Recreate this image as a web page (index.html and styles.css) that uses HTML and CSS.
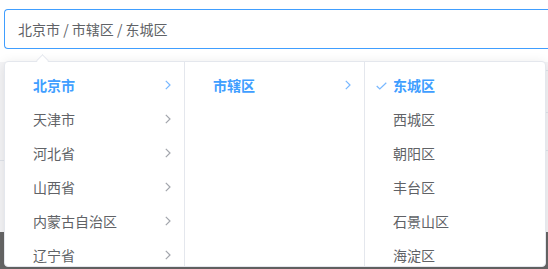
FILE: index.html
```html
<!DOCTYPE html>
<html>

<head>
    <title>Cascader</title>
    <link rel="stylesheet" href="styles.css">
</head>

<body>

    <div class="cascader">
        <div class="cascader-input">北京市 / 市辖区 / 东城区</div>

        <div class="dropdown">
            <div class="popper-arrow"></div>
            <div class="panel">
                <ul class="menu">
                    <li class="node active">
                        <span class="label">北京市</span>
                        <svg class="postfix" width="6" height="10" viewBox="0 0 6 10"><path d="M0.8 0.8 L5 5 L0.8 9.2" /></svg>
                    </li>
                    <li class="node">
                        <span class="label">天津市</span>
                        <svg class="postfix" width="6" height="10" viewBox="0 0 6 10"><path d="M0.8 0.8 L5 5 L0.8 9.2" /></svg>
                    </li>
                    <li class="node">
                        <span class="label">河北省</span>
                        <svg class="postfix" width="6" height="10" viewBox="0 0 6 10"><path d="M0.8 0.8 L5 5 L0.8 9.2" /></svg>
                    </li>
                    <li class="node">
                        <span class="label">山西省</span>
                        <svg class="postfix" width="6" height="10" viewBox="0 0 6 10"><path d="M0.8 0.8 L5 5 L0.8 9.2" /></svg>
                    </li>
                    <li class="node">
                        <span class="label">内蒙古自治区</span>
                        <svg class="postfix" width="6" height="10" viewBox="0 0 6 10"><path d="M0.8 0.8 L5 5 L0.8 9.2" /></svg>
                    </li>
                    <li class="node">
                        <span class="label">辽宁省</span>
                        <svg class="postfix" width="6" height="10" viewBox="0 0 6 10"><path d="M0.8 0.8 L5 5 L0.8 9.2" /></svg>
                    </li>
                </ul>
                <ul class="menu">
                    <li class="node active">
                        <span class="label">市辖区</span>
                        <svg class="postfix" width="6" height="10" viewBox="0 0 6 10"><path d="M0.8 0.8 L5 5 L0.8 9.2" /></svg>
                    </li>
                </ul>
                <ul class="menu">
                    <li class="node active">
                        <svg class="prefix" width="11" height="8" viewBox="0 0 11 8"><path d="M0.7 4 L3.8 7 L10.3 0.7" /></svg>
                        <span class="label">东城区</span>
                    </li>
                    <li class="node"><span class="label">西城区</span></li>
                    <li class="node"><span class="label">朝阳区</span></li>
                    <li class="node"><span class="label">丰台区</span></li>
                    <li class="node"><span class="label">石景山区</span></li>
                    <li class="node"><span class="label">海淀区</span></li>
                </ul>
            </div>
        </div>
    </div>

    <div class="backdrop">
        <div class="side side-left">
            <div class="row" style="height: 98px"></div>
        </div>
        <div class="side side-right">
            <div class="row" style="height: 8px"></div>
            <div class="row" style="height: 41px"></div>
            <div class="row" style="height: 37px"></div>
        </div>
    </div>
    <div class="footer"></div>

</body>

</html>
```

FILE: styles.css
```css
body {
    margin: 0;
    width: 548px;
    height: 269px;
    overflow: hidden;
    background-color: #fff;
    font-family: "Noto Sans CJK SC", "Liberation Sans", sans-serif;
    color: #606266;
    font-size: 14px;
}

.cascader {
    position: relative;
    padding: 9px 0 0 4px;
}

/* right edge of the input is cut off by the frame */
.cascader-input {
    box-sizing: border-box;
    width: 544px;
    height: 40px;
    line-height: 38px;
    padding: 0 13px;
    border: 1px solid #409eff;
    border-right: none;
    border-radius: 4px 0 0 4px;
    color: #606266;
    white-space: nowrap;
}

.dropdown {
    position: absolute;
    top: 61px;
    left: 4px;
    z-index: 10;
}

.popper-arrow {
    position: absolute;
    top: -5px;
    left: 34px;
    width: 8px;
    height: 8px;
    background-color: #fff;
    border-top: 1px solid #e4e7ed;
    border-left: 1px solid #e4e7ed;
    transform: rotate(45deg);
    z-index: 2;
}

.panel {
    display: flex;
    background-color: #fff;
    border: 1px solid #e4e7ed;
    border-radius: 4px;
    box-shadow: 0 2px 12px rgba(0, 0, 0, 0.1);
    overflow: hidden;
}

.menu {
    box-sizing: border-box;
    width: 180px;
    height: 204px;
    margin: 0;
    padding: 6px 0;
    list-style: none;
    border-right: 1px solid #e4e7ed;
    overflow: hidden;
}

.menu:last-child {
    border-right: none;
}

.node {
    position: relative;
    display: flex;
    align-items: center;
    height: 34px;
    padding: 0 30px 0 20px;
    color: #606266;
}

.label {
    padding: 0 8px;
    white-space: nowrap;
}

.node.active {
    color: #409eff;
    font-weight: 700;
}

.postfix {
    position: absolute;
    right: 13px;
    top: 12px;
    fill: none;
    stroke: #a3a6ad;
    stroke-width: 1.2;
}

.node.active .postfix {
    stroke: #79b8ff;
}

.prefix {
    position: absolute;
    left: 11px;
    top: 14px;
    fill: none;
    stroke: #79b8ff;
    stroke-width: 1.2;
}

.backdrop {
    display: flex;
    justify-content: space-between;
    margin-top: 13px;
    height: 170px;
}

.side {
    width: 6px;
    background-color: #f4f4f6;
}

.row {
    border-bottom: 1px solid #dfe3ea;
}

.footer {
    height: 40px;
    background-color: #666;
}
```
